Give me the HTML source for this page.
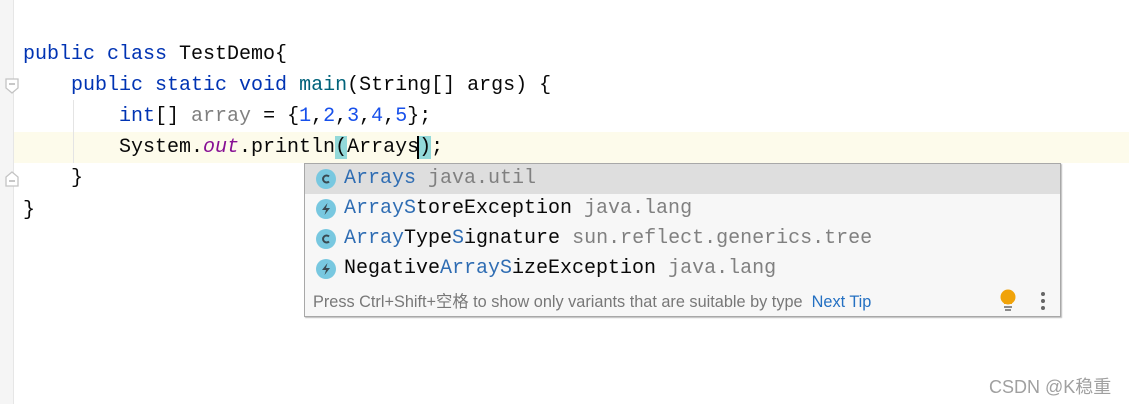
<!DOCTYPE html>
<html><head><style>
body{margin:0;width:1129px;height:404px;background:#fff;position:relative;overflow:hidden;font-family:"Liberation Mono",monospace;}
.gut{position:absolute;left:0;top:0;width:13px;height:404px;background:#f5f5f5;border-right:1px solid #e6e6e6}
.cur{position:absolute;left:14px;top:132px;width:1115px;height:31px;background:#fdfbeb}
.l{position:absolute;left:23px;font-size:20px;line-height:31px;white-space:pre;color:#080808;height:31px;top:0}
.k{color:#0033b3}.g{color:#808080}.n{color:#1750eb}.m{color:#00627a}.o{color:#871094;font-style:italic}
.br{background:#93d9d9}
.guide{position:absolute;left:73px;top:100px;width:1px;height:63px;background:#e4e4e4}
.fold{position:absolute;left:5px;width:14px;height:16px;}
.pop{position:absolute;left:304px;top:163px;width:755px;height:152px;background:#f7f7f7;border:1px solid #a8a8a8;box-shadow:1px 1px 1px #bbb}
.r{position:absolute;left:0;width:755px;height:30px;font-size:20px;line-height:30px;white-space:pre;color:#080808}
.r span.t{position:absolute;left:39px}
.b{color:#2f6db3}.pk{color:#808080}
.ic{position:absolute;left:11px;top:5px;width:20px;height:20px;}
.foot{position:absolute;left:8px;top:124px;font:16.3px "Liberation Sans","Noto Sans CJK SC",sans-serif;color:#787878;white-space:pre}
.wm{position:absolute;left:989px;top:373px;font:18px "Liberation Sans","Noto Sans CJK SC",sans-serif;color:#a0a0a0}
</style></head><body>
<div class="gut"></div>
<div class="cur"></div>
<div class="guide"></div>
<svg class="fold" style="top:78px" viewBox="0 0 14 16"><path d="M1 1H13V10L7 15L1 10Z" fill="#fff" stroke="#c4c4c4" stroke-width="1.3"/><path d="M4 6H10" stroke="#aaa" stroke-width="1.3"/></svg>
<svg class="fold" style="top:171px" viewBox="0 0 14 16"><path d="M1 15H13V6L7 1L1 6Z" fill="#fff" stroke="#c4c4c4" stroke-width="1.3"/><path d="M4 10H10" stroke="#aaa" stroke-width="1.3"/></svg>
<div class="l" style="top:39px"><span class="k">public class</span> TestDemo{</div>
<div class="l" style="top:70px">    <span class="k">public static void</span> <span class="m">main</span>(String[] args) {</div>
<div class="l" style="top:101px">        <span class="k">int</span>[] <span class="g">array</span> = {<span class="n">1</span>,<span class="n">2</span>,<span class="n">3</span>,<span class="n">4</span>,<span class="n">5</span>};</div>
<div class="l" style="top:132px">        System.<span class="o">out</span>.println<span class="br">(</span>Arrays<span class="br" style="border-left:2px solid #000;margin-left:-2px">)</span>;</div>
<div class="l" style="top:163px">    }</div>
<div class="l" style="top:195px">}</div>
<div class="pop">
<div class="r" style="top:0;background:#dedede"><svg class="ic" viewBox="0 0 20 20"><circle cx="10" cy="10" r="10" fill="#78c8e0"/><path d="M13 7.5A3.5 3.5 0 1 0 13 12.5" fill="none" stroke="#3a4a52" stroke-width="2"/></svg><span class="t"><span class="b">Arrays</span> <span class="pk">java.util</span></span></div>
<div class="r" style="top:30px"><svg class="ic" viewBox="0 0 20 20"><circle cx="10" cy="10" r="10" fill="#78c8e0"/><path d="M11.5 4L6 11H10L8.5 16L14 9H10Z" fill="#3a4a52"/></svg><span class="t"><span class="b">ArrayS</span>toreException <span class="pk">java.lang</span></span></div>
<div class="r" style="top:60px"><svg class="ic" viewBox="0 0 20 20"><circle cx="10" cy="10" r="10" fill="#78c8e0"/><path d="M13 7.5A3.5 3.5 0 1 0 13 12.5" fill="none" stroke="#3a4a52" stroke-width="2"/></svg><span class="t"><span class="b">Array</span>Type<span class="b">S</span>ignature <span class="pk">sun.reflect.generics.tree</span></span></div>
<div class="r" style="top:90px"><svg class="ic" viewBox="0 0 20 20"><circle cx="10" cy="10" r="10" fill="#78c8e0"/><path d="M11.5 4L6 11H10L8.5 16L14 9H10Z" fill="#3a4a52"/></svg><span class="t">Negative<span class="b">ArrayS</span>izeException <span class="pk">java.lang</span></span></div>
<div class="foot">Press Ctrl+Shift+空格 to show only variants that are suitable by type  <span style="color:#2470c2">Next Tip</span></div>
<svg style="position:absolute;left:694px;top:125px" width="18" height="24" viewBox="0 0 18 24"><circle cx="9" cy="8" r="7.5" fill="#f0a30a"/><rect x="5" y="11" width="8" height="4" fill="#f0a30a"/><path d="M5 18H13M6 21H12" stroke="#666" stroke-width="1.5"/></svg>
<svg style="position:absolute;left:734px;top:127px" width="8" height="20"><circle cx="4" cy="3" r="2" fill="#666"/><circle cx="4" cy="10" r="2" fill="#666"/><circle cx="4" cy="17" r="2" fill="#666"/></svg>
</div>
<div class="wm">CSDN @K稳重</div>
</body></html>
